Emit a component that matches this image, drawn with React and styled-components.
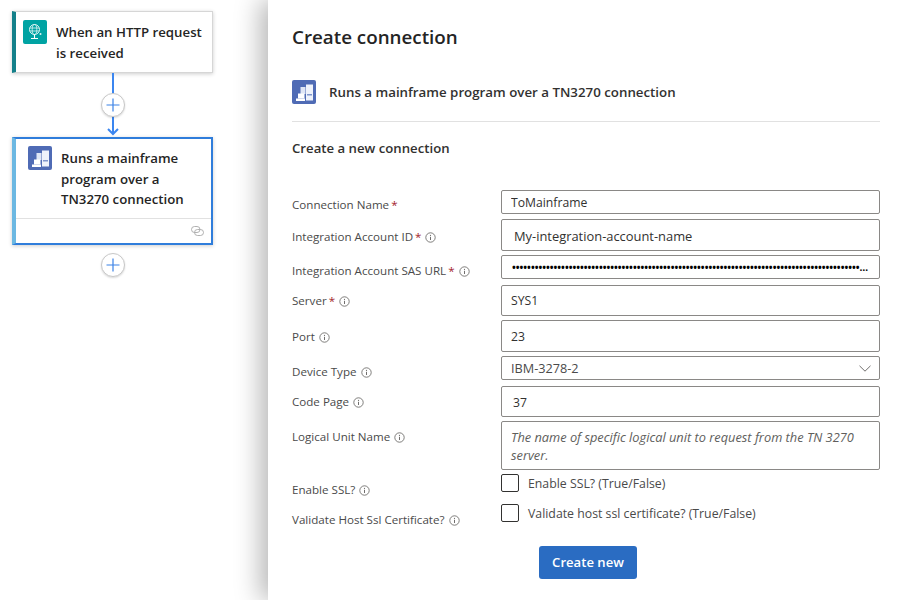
import React from "react";
import styled, { createGlobalStyle } from "styled-components";

const Global = createGlobalStyle`
  html, body { margin: 0; padding: 0; background: #fff; }
  body { font-family: "Open Sans", "Noto Sans", sans-serif; color: #242424; }
  #root { width: 900px; height: 600px; overflow: hidden; }
`;

const Page = styled.div`
  display: flex;
  width: 900px;
  height: 600px;
  overflow: hidden;
  background: #fff;
`;

const Canvas = styled.div`
  position: relative;
  width: 268px;
  flex: none;
  background: #fff;
`;

const Node = styled.div`
  position: absolute;
  left: 12px;
  top: ${(p) => p.$top}px;
  width: 201px;
  height: ${(p) => p.$height}px;
  box-sizing: border-box;
  background: #fff;
  border: ${(p) => (p.$selected ? "2px solid #2f7ddb" : "1px solid #d6d6d6")};
  border-left: 4px solid ${(p) => p.$accent};
  box-shadow: 0 1px 4px rgba(0, 0, 0, 0.2);
  display: flex;
  flex-direction: column;
`;

const NodeBody = styled.div`
  display: flex;
  align-items: flex-start;
  gap: 9px;
  flex: 1;
  padding: ${(p) => p.$pad};
`;

const IconTile = styled.div`
  width: ${(p) => p.$size}px;
  height: ${(p) => p.$size}px;
  flex: none;
  border-radius: 2px;
  background: ${(p) => p.$bg};
  display: flex;
  align-items: center;
  justify-content: center;
`;

const NodeTitle = styled.div`
  font-size: 13.25px;
  font-weight: 600;
  line-height: ${(p) => p.$lh}px;
  margin-top: 2px;
  color: #242424;
`;

const NodeFooter = styled.div`
  height: 24px;
  flex: none;
  border-top: 1px solid #e1e1e1;
  display: flex;
  align-items: center;
  justify-content: flex-end;
  padding-right: 7px;
`;

const Connector = styled.svg`
  position: absolute;
  left: 103px;
  top: 73px;
`;

const AddButton = styled.div`
  position: absolute;
  left: 101px;
  top: ${(p) => p.$top}px;
  width: 24px;
  height: 24px;
  box-sizing: border-box;
  border-radius: 50%;
  background: #fff;
  border: 1px solid #c8c8c8;
  box-shadow: 0 1px 2px rgba(0, 0, 0, 0.15);
  display: flex;
  align-items: center;
  justify-content: center;
`;

const Panel = styled.div`
  position: relative;
  flex: 1;
  box-sizing: border-box;
  padding: 25px 20px 0 24px;
  background: #fff;
  box-shadow: -8px 0 24px rgba(0, 0, 0, 0.28);
`;

const Title = styled.h1`
  margin: 0;
  font-size: 18.8px;
  font-weight: 600;
  line-height: 24px;
  color: #242424;
`;

const ActionRow = styled.div`
  display: flex;
  align-items: center;
  gap: 13px;
  margin-top: 31px;
  height: 24px;
  padding-bottom: 17px;
  border-bottom: 1px solid #e1e1e1;
`;

const ActionName = styled.div`
  font-size: 13.3px;
  font-weight: 600;
  color: #323130;
`;

const SectionTitle = styled.h2`
  margin: 16px 0 0;
  font-size: 13.2px;
  font-weight: 600;
  line-height: 20px;
  color: #323130;
`;

const Form = styled.div`
  display: flex;
  flex-direction: column;
  margin-top: 32px;
`;

const Row = styled.div`
  display: grid;
  grid-template-columns: 209px 379px;
  align-items: start;
  height: ${(p) => p.$h}px;
  margin-bottom: ${(p) => p.$mb}px;
`;

const Label = styled.div`
  display: flex;
  align-items: center;
  gap: 4px;
  font-size: 11.6px;
  line-height: 16px;
  color: #4a4a4a;
  margin-top: ${(p) => p.$offset}px;
  white-space: nowrap;
`;

const Req = styled.span`
  color: #a4262c;
  margin-left: -1px;
`;

const Field = styled.input`
  box-sizing: border-box;
  width: 379px;
  height: ${(p) => p.$h}px;
  padding: ${(p) => p.$nudge || 0}px 8px 0 ${(p) => p.$pad || 9}px;
  border: 1px solid #8a8886;
  border-radius: 2px;
  background: #fff;
  font-family: inherit;
  font-size: ${(p) => p.$fs || 12.2}px;
  color: #323130;
  outline: none;
  text-overflow: ellipsis;
  display: block;
`;

const Secret = styled(Field)`
  font-size: 10.05px;
  font-weight: 700;
  color: #000;
`;

const Area = styled.textarea`
  box-sizing: border-box;
  width: 379px;
  height: 49px;
  padding: 6px 9px;
  border: 1px solid #8a8886;
  border-radius: 2px;
  background: #fff;
  resize: none;
  outline: none;
  display: block;
  overflow: hidden;
  font-family: inherit;
  font-size: 12.8px;
  line-height: 18px;
  &::placeholder { color: #605e5c; font-style: italic; opacity: 1; }
`;

const SelectBox = styled.div`
  box-sizing: border-box;
  width: 379px;
  height: 24px;
  padding: 0 8px 0 9px;
  border: 1px solid #8a8886;
  border-radius: 2px;
  display: flex;
  align-items: center;
  justify-content: space-between;
  font-size: 12.7px;
  color: #4a4a4a;
`;

const CheckLine = styled.label`
  display: flex;
  align-items: center;
  gap: 9px;
  font-size: 12.3px;
  color: #4a4a4a;
  height: 18px;
`;

const CheckBox = styled.span`
  box-sizing: border-box;
  width: 18px;
  height: 18px;
  flex: none;
  border: 1px solid #323130;
  border-radius: 2px;
`;

const Actions = styled.div`
  display: flex;
  margin-top: 12px;
  padding-left: 247px;
`;

const Primary = styled.button`
  width: 98px;
  height: 33px;
  padding: 0 0 2px;
  border: none;
  border-radius: 3px;
  background: #2a6cc2;
  color: #fff;
  font-family: inherit;
  font-size: 13.1px;
  font-weight: 600;
`;

const Info = () => (
  <svg width="11" height="11" viewBox="0 0 11 11" fill="none" aria-hidden="true">
    <circle cx="5.5" cy="5.5" r="4.7" stroke="#605e5c" strokeWidth="0.8" />
    <path d="M5.5 4.8V8" stroke="#605e5c" strokeWidth="0.9" />
    <circle cx="5.5" cy="3.3" r="0.6" fill="#605e5c" />
  </svg>
);

const Chevron = () => (
  <svg width="12" height="7" viewBox="0 0 12 7" fill="none" aria-hidden="true">
    <path d="M.5.8 6 6.2 11.500.8" stroke="#605e5c" strokeWidth="0.9" />
  </svg>
);

const Plus = ({ color = "#3b82e6" }) => (
  <svg width="14" height="14" viewBox="0 0 14 14" fill="none" aria-hidden="true">
    <path d="M7 0.500V13.500M.5 7H13.500" stroke={color} strokeWidth="1.2" />
  </svg>
);

const GlobeIcon = () => (
  <svg width="16" height="18" viewBox="0 0 16 18" fill="none" aria-hidden="true">
    <circle cx="7.500" cy="6.500" r="5" stroke="#dff4f4" strokeWidth="1" />
    <ellipse cx="7.500" cy="6.500" rx="2.300" ry="5" stroke="#dff4f4" strokeWidth="0.8" />
    <path d="M2.800 5h9.400M2.800 8h9.400" stroke="#dff4f4" strokeWidth="0.8" />
    <path d="M7.500 11.500V15M4 15.500h7" stroke="#fff" strokeWidth="1.100" />
    <circle cx="13.500" cy="11" r="1" fill="#dff4f4" />
  </svg>
);

const MainframeIcon = () => (
  <svg width="24" height="24" viewBox="0 0 24 24" fill="none" aria-hidden="true">
    <rect x="14" y="4.500" width="7" height="16" fill="#eef2fb" />
    <rect x="15" y="14" width="5" height="1.500" fill="#7f95cc" />
    <rect x="8.500" y="7" width="5" height="7" fill="#dfe6f5" />
    <rect x="6" y="13.500" width="6.500" height="5" fill="#fff" />
    <rect x="4" y="18.500" width="9" height="2.500" fill="#fff" />
  </svg>
);

const LinkIcon = () => (
  <svg width="13" height="10" viewBox="0 0 13 10" fill="none" aria-hidden="true">
    <rect x="0.500" y="0.500" width="8.500" height="6" rx="3" stroke="#a8a8a8" strokeWidth="0.9" />
    <rect x="3.500" y="3.500" width="9" height="6" rx="3" stroke="#a8a8a8" strokeWidth="0.9" />
  </svg>
);

const fields = [
  { label: "Connection Name", req: true, info: false, h: 24, mb: 5, off: 7, value: "ToMainframe" },
  { label: "Integration Account ID", req: true, info: true, h: 32, mb: 4, off: 10, value: "My-integration-account-name", pad: 12, fs: 12.9, nudge: 2 },
  { label: "Integration Account SAS URL", req: true, info: true, h: 24, mb: 6, off: 8, secret: true, pad: 10 },
  { label: "Server", req: true, info: true, h: 31, mb: 4, off: 8, value: "SYS1" },
  { label: "Port", info: true, h: 32, mb: 4, off: 9, value: "23" },
  { label: "Device Type", info: true, h: 24, mb: 6, off: 8, select: "IBM-3278-2" },
  { label: "Code Page", info: true, h: 31, mb: 4, off: 8, value: "37", pad: 11, nudge: 2 },
  {
    label: "Logical Unit Name",
    info: true,
    h: 49,
    mb: 4,
    off: 8,
    area: "The name of specific logical unit to request from the TN 3270 server.",
  },
  { label: "Enable SSL?", info: true, h: 18, mb: 12, off: 8, check: "Enable SSL? (True/False)" },
  { label: "Validate Host Ssl Certificate?", info: true, h: 18, mb: 12, off: 8, check: "Validate host ssl certificate? (True/False)" },
];

function Control({ f }) {
  if (f.secret) return <Secret type="password" readOnly value={"x".repeat(120)} $h={f.h} $pad={f.pad} />;
  if (f.select)
    return (
      <SelectBox>
        {f.select}
        <Chevron />
      </SelectBox>
    );
  if (f.area) return <Area readOnly placeholder={f.area} />;
  if (f.check)
    return (
      <CheckLine>
        <CheckBox />
        {f.check}
      </CheckLine>
    );
  return <Field readOnly value={f.value} $h={f.h} $pad={f.pad} $fs={f.fs} $nudge={f.nudge} />;
}

export default function App() {
  return (
    <Page>
      <Global />
      <Canvas>
        <Node $top={11} $height={62} $accent="#14808a">
          <NodeBody $pad="8px 8px 0 7px">
            <IconTile $size={24} $bg="#00a3a3">
              <GlobeIcon />
            </IconTile>
            <NodeTitle $lh={21}>When an HTTP request is received</NodeTitle>
          </NodeBody>
        </Node>
        <Connector width="20" height="64" viewBox="0 0 20 64" fill="none" aria-hidden="true">
          <path d="M10 0V61" stroke="#3b86f0" strokeWidth="2" />
          <path d="M5 56l5 5 5-5" stroke="#3b86f0" strokeWidth="2" />
        </Connector>
        <AddButton $top={93}>
          <Plus />
        </AddButton>
        <Node $top={137} $height={108} $accent="#6cb8e2" $selected>
          <NodeBody $pad="7px 8px 0 12px">
            <IconTile $size={24} $bg="#4f6bb5">
              <MainframeIcon />
            </IconTile>
            <NodeTitle $lh={20.500}>Runs a mainframe program over a TN3270 connection</NodeTitle>
          </NodeBody>
          <NodeFooter>
            <LinkIcon />
          </NodeFooter>
        </Node>
        <AddButton $top={253}>
          <Plus />
        </AddButton>
      </Canvas>
      <Panel>
        <Title>Create connection</Title>
        <ActionRow>
          <IconTile $size={24} $bg="#4f6bb5">
            <MainframeIcon />
          </IconTile>
          <ActionName>Runs a mainframe program over a TN3270 connection</ActionName>
        </ActionRow>
        <SectionTitle>Create a new connection</SectionTitle>
        <Form>
          {fields.map((f) => (
            <Row key={f.label} $h={f.h} $mb={f.mb}>
              <Label $offset={f.off}>
                <span>
                  {f.label}
                  {f.req && <Req> *</Req>}
                </span>
                {f.info && <Info />}
              </Label>
              <Control f={f} />
            </Row>
          ))}
        </Form>
        <Actions>
          <Primary>Create new</Primary>
        </Actions>
      </Panel>
    </Page>
  );
}
